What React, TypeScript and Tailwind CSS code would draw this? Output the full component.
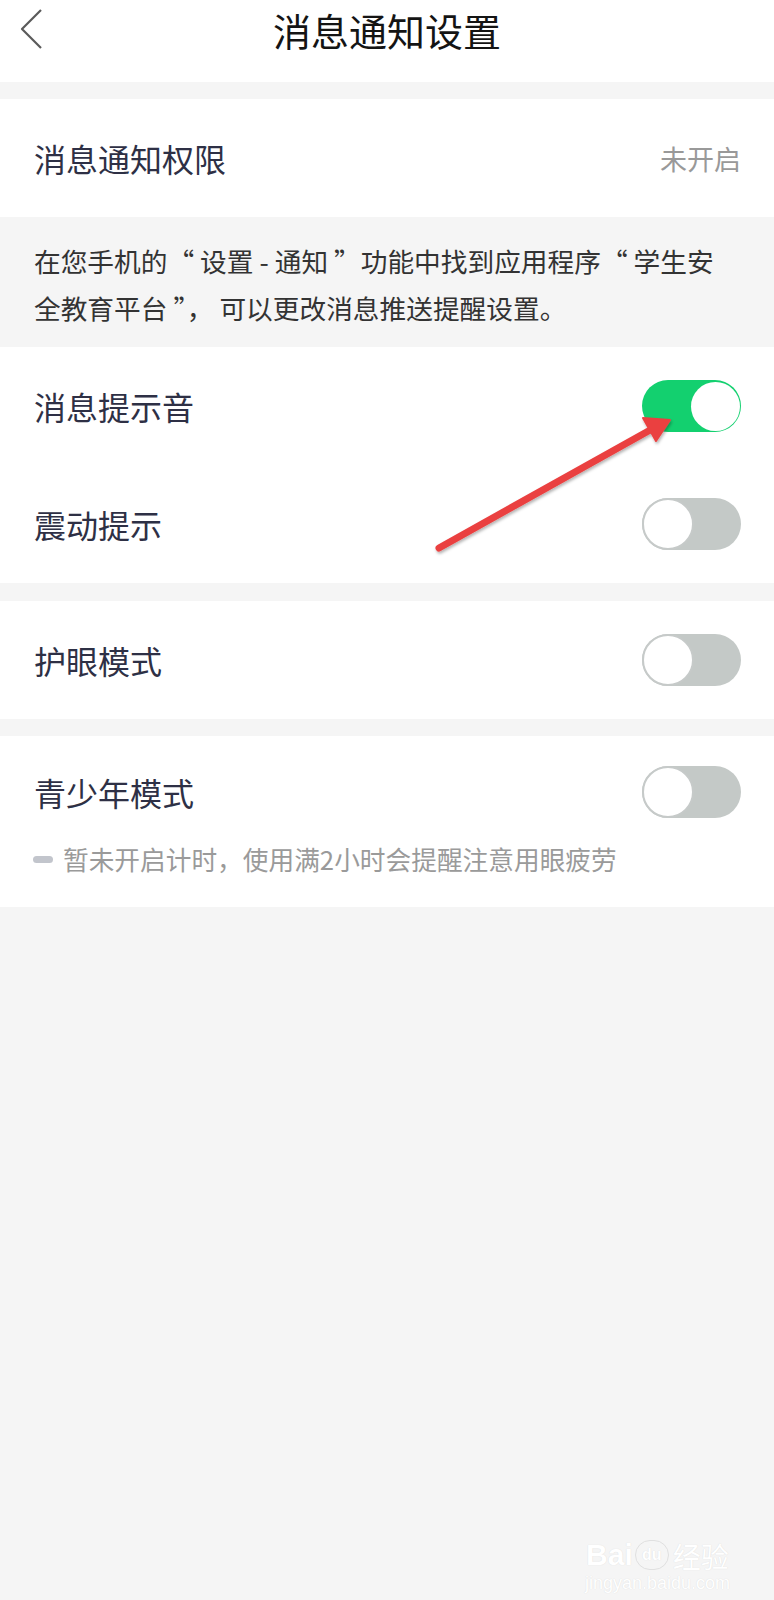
import React from "react"

const font = { fontFamily: '"Noto Sans CJK SC", "Noto Sans", sans-serif' }

function Toggle({ on }: { on: boolean }) {
  if (on) {
    return (
      <div className="flex h-[52px] w-[99px] items-center justify-end rounded-full bg-[#13d06f] p-[1.5px]">
        <div className="h-[49px] w-[49px] rounded-full bg-white" />
      </div>
    )
  }
  return (
    <div className="flex h-[52px] w-[99px] items-center justify-start rounded-full bg-[#c4c9c7]">
      <div className="h-[52px] w-[52px] rounded-full border-[2px] border-[#c6cac9] bg-white" />
    </div>
  )
}

function Row({ label, right, className }: { label: string; right: React.ReactNode; className?: string }) {
  return (
    <div className={"flex items-center justify-between pl-[34px] pr-[33px] " + (className ?? "h-[118px]")}>
      <span className="text-[32px] leading-none text-[#2e3045]">{label}</span>
      {right}
    </div>
  )
}

function Arrow() {
  return (
    <svg className="pointer-events-none absolute left-0 top-0" width="774" height="600" viewBox="0 0 774 600">
      <defs>
        <filter id="sh" x="-10%" y="-10%" width="120%" height="120%">
          <feDropShadow dx="1" dy="2" stdDeviation="1.5" floodColor="#000" floodOpacity="0.3" />
        </filter>
      </defs>
      <g filter="url(#sh)" fill="#ea4141" stroke="#ea4141">
        <line x1="439" y1="548" x2="652" y2="429" strokeWidth="7" strokeLinecap="round" />
        <polygon points="670,420 643,418 656,441" strokeWidth="2" strokeLinejoin="round" />
      </g>
    </svg>
  )
}

export default function App() {
  return (
    <div className="relative min-h-[1600px] w-full bg-[#f5f5f5]" style={font}>
      {/* header */}
      <header className="relative h-[82px] bg-white">
        <div className="flex h-[60px] items-center justify-center">
          <h1 className="text-[38px] leading-none font-normal text-[#141414]">消息通知设置</h1>
        </div>
        <svg className="absolute left-[19px] top-[8px]" width="26" height="42" viewBox="0 0 26 42">
          <polyline points="22,2 3,21 22,40" fill="none" stroke="#5a5a5a" strokeWidth="2.2" strokeLinejoin="round" />
        </svg>
      </header>

      <div className="mt-[17px] bg-white">
        <Row label="消息通知权限" right={<span className="text-[27px] leading-none text-[#999999]">未开启</span>} />
      </div>

      <div className="pl-[34px] pr-[30px] pt-[20px] pb-[16px] text-[26.7px] leading-[47px] text-[#333333]">
        在您手机的“ 设置 - 通知 ”功能中找到应用程序“ 学生安
        <br />
        全教育平台 ”， 可以更改消息推送提醒设置。
      </div>

      <div className="bg-white">
        <Row label="消息提示音" right={<Toggle on />} />
        <Row label="震动提示" right={<Toggle on={false} />} />
      </div>

      <div className="mt-[18px] bg-white">
        <Row label="护眼模式" right={<Toggle on={false} />} />
      </div>

      <div className="mt-[17px] bg-white pb-[37px]">
        <Row label="青少年模式" right={<Toggle on={false} />} className="h-[112px]" />
        <div className="flex items-center gap-[10px] pl-[33px] text-[25.7px] leading-[22px] text-[#9a9a9a]">
          <span className="h-[7px] w-[20px] rounded-full bg-[#c2c5cc]" />
          <span>暂未开启计时，使用满2小时会提醒注意用眼疲劳</span>
        </div>
      </div>

      {/* watermark */}
      <div className="absolute bottom-[8px] right-[44px] flex flex-col items-center text-white [text-shadow:0_0_1px_#d6d6d6]">
        <div className="flex items-end gap-[2px] text-[30px] font-bold leading-none" style={{ fontFamily: '"Liberation Sans", "Noto Sans CJK SC", sans-serif' }}>
          <span>Bai</span>
          <span className="flex h-[30px] w-[34px] items-center justify-center rounded-full border border-[#e0e0e0] text-[16px]">du</span>
          <span className="ml-[2px] text-[28px] font-normal" style={font}>经验</span>
        </div>
        <div className="mt-[4px] text-[18px] leading-none" style={{ fontFamily: '"Liberation Sans", sans-serif' }}>jingyan.baidu.com</div>
      </div>

      <Arrow />
    </div>
  )
}
